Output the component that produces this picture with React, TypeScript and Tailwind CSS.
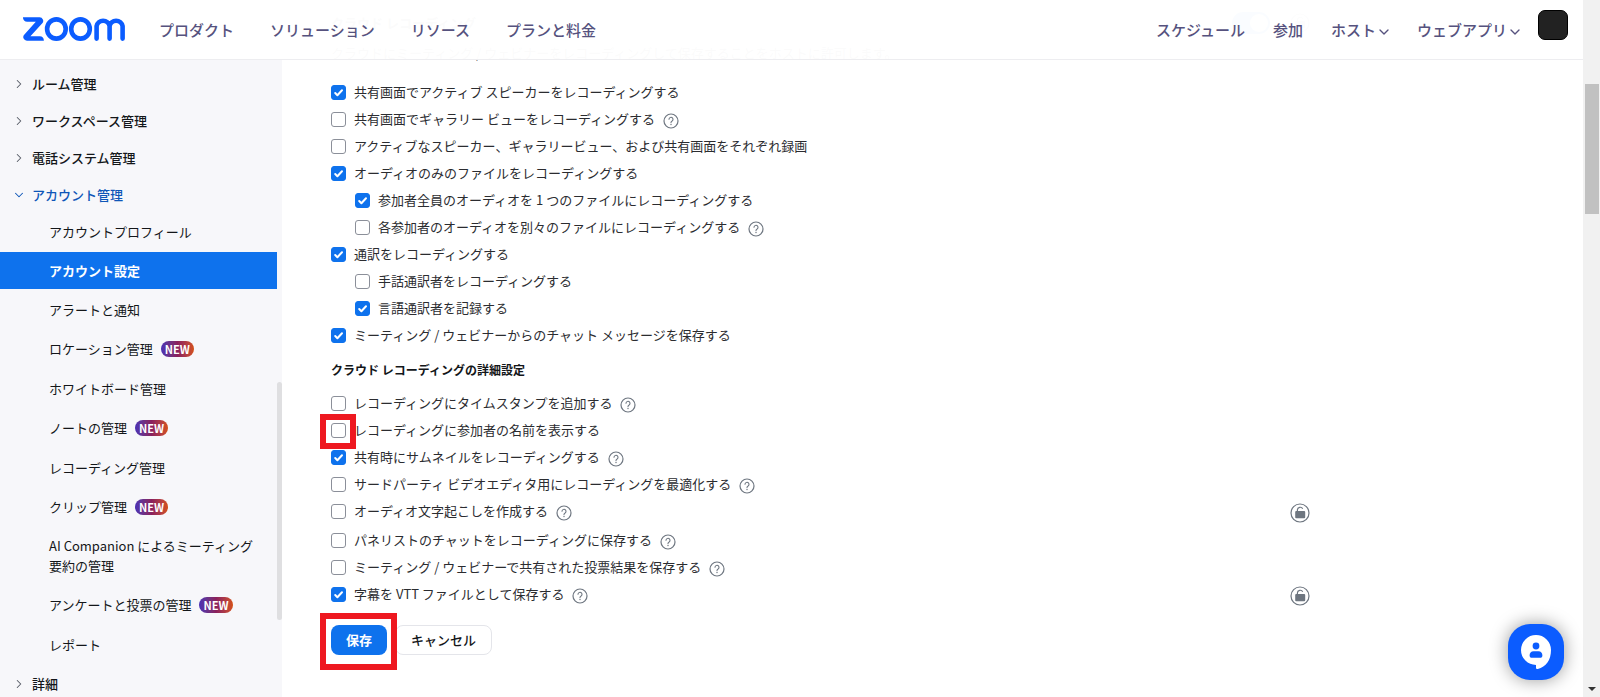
import React from "react";
import { ChevronDown, ChevronRight } from "lucide-react";

type SubItem = { label: string; isNew?: boolean; active?: boolean };
type Option = { id: string; label: string; checked?: boolean; help?: boolean; nested?: boolean; lock?: boolean; marked?: boolean };

const sections = ["ルーム管理", "ワークスペース管理", "電話システム管理"];

const accountItems: SubItem[] = [
  { label: "アカウントプロフィール" },
  { label: "アカウント設定", active: true },
  { label: "アラートと通知" },
  { label: "ロケーション管理", isNew: true },
  { label: "ホワイトボード管理" },
  { label: "ノートの管理", isNew: true },
  { label: "レコーディング管理" },
  { label: "クリップ管理", isNew: true },
  { label: "AI Companion によるミーティング要約の管理" },
  { label: "アンケートと投票の管理", isNew: true },
  { label: "レポート" },
];

const basicOptions: Option[] = [
  { id: "active-speaker", label: "共有画面でアクティブ スピーカーをレコーディングする", checked: true },
  { id: "gallery", label: "共有画面でギャラリー ビューをレコーディングする", help: true },
  { id: "separate", label: "アクティブなスピーカー、ギャラリービュー、および共有画面をそれぞれ録画" },
  { id: "audio-only", label: "オーディオのみのファイルをレコーディングする", checked: true },
  { id: "audio-one", label: "参加者全員のオーディオを 1 つのファイルにレコーディングする", checked: true, nested: true },
  { id: "audio-each", label: "各参加者のオーディオを別々のファイルにレコーディングする", help: true, nested: true },
  { id: "interpretation", label: "通訳をレコーディングする", checked: true },
  { id: "sign", label: "手話通訳者をレコーディングする", nested: true },
  { id: "language", label: "言語通訳者を記録する", checked: true, nested: true },
  { id: "chat", label: "ミーティング / ウェビナーからのチャット メッセージを保存する", checked: true },
];

const advancedOptions: Option[] = [
  { id: "timestamp", label: "レコーディングにタイムスタンプを追加する", help: true },
  { id: "names", label: "レコーディングに参加者の名前を表示する", marked: true },
  { id: "thumbnail", label: "共有時にサムネイルをレコーディングする", checked: true, help: true },
  { id: "editor", label: "サードパーティ ビデオエディタ用にレコーディングを最適化する", help: true },
  { id: "transcript", label: "オーディオ文字起こしを作成する", help: true, lock: true },
  { id: "panelist", label: "パネリストのチャットをレコーディングに保存する", help: true },
  { id: "polls", label: "ミーティング / ウェビナーで共有された投票結果を保存する", help: true },
  { id: "vtt", label: "字幕を VTT ファイルとして保存する", checked: true, help: true, lock: true },
];

function Logo() {
  return (
    <svg viewBox="0 0 102 24" className="h-6 w-[102px]" fill="none" stroke="#0b5cff" strokeWidth="4.6" strokeLinecap="round" strokeLinejoin="round" aria-label="Zoom" role="img">
      <path d="M0 .3h16.6a3.6 3.6 0 0 1 2.7 6L7.4 19.2h9.4a4 4 0 0 1 4 4.5H3.9a3.6 3.6 0 0 1-2.7-6L12.8 4.8H4.2A4.2 4.2 0 0 1 0 .3z" fill="#0b5cff" stroke="none" />
      <ellipse cx="33.4" cy="12" rx="9.3" ry="9.6" />
      <ellipse cx="57.5" cy="12" rx="9.3" ry="9.6" />
      <path d="M73.6 21.6V9.2a6.6 6.6 0 0 1 13 0v12.4M86.6 9.2a6.6 6.6 0 0 1 13 0v12.4" />
    </svg>
  );
}

function HelpIcon() {
  return (
    <svg viewBox="0 0 16 16" className="mt-[7px] size-4 shrink-0" fill="none" stroke="#6e7680" aria-hidden="true">
      <circle cx="8" cy="8" r="7" strokeWidth="1.2" />
      <path d="M6 6.3a2 2 0 1 1 3.1 1.7C8.3 8.5 8 8.8 8 9.6" strokeWidth="1.1" strokeLinecap="round" />
      <circle cx="8" cy="11.5" r=".7" fill="#6e7680" stroke="none" />
    </svg>
  );
}

function LockIcon() {
  return (
    <svg viewBox="0 0 20 20" className="size-5" fill="none" stroke="#6e7680" aria-hidden="true">
      <circle cx="10" cy="10" r="9" strokeWidth="1.2" />
      <rect x="5.2" y="8" width="10" height="7.2" rx="1" fill="#6e7680" stroke="none" />
      <path d="M7.400 8.200V7a2.800 2.800 0 0 1 5.300-1.200" strokeWidth="1.2" />
    </svg>
  );
}

function OptionRow({ option }: { option: Option }) {
  return (
    <li className={`flex items-start ${option.lock ? "h-[29px]" : "h-[27px]"} ${option.nested ? "pl-6" : ""}`}>
      <span className="relative mt-[6px] grid size-[15px] shrink-0">
        <input
          id={option.id}
          type="checkbox"
          defaultChecked={option.checked}
          className="peer col-start-1 row-start-1 size-[15px] appearance-none rounded-[3px] border border-[#8b8f99] bg-white checked:border-[#0e72ed] checked:bg-[#0e72ed]"
        />
        <svg viewBox="0 0 15 15" className="pointer-events-none col-start-1 row-start-1 hidden size-[15px] peer-checked:block" fill="none" stroke="#fff" strokeWidth="2" strokeLinecap="round" strokeLinejoin="round" aria-hidden="true">
          <path d="M4.2 8l2.2 2.2 4.6-5" />
        </svg>
        {option.marked && <span className="pointer-events-none absolute -top-[9px] -left-[11px] z-10 h-[35px] w-9 border-[6px] border-[#ee1820]" />}
      </span>
      <label htmlFor={option.id} className="ml-2 leading-[26px]">{option.label}</label>
      {option.help && (
        <button type="button" aria-label="ヘルプ" className="ml-2">
          <HelpIcon />
        </button>
      )}
      {option.lock && (
        <button type="button" aria-label="ロック" className="mt-[5px] ml-auto">
          <LockIcon />
        </button>
      )}
    </li>
  );
}

function Sidebar() {
  return (
    <aside className="flex w-[282px] shrink-0 bg-[#f7f7fa] pt-[65px]">
      <nav className="w-[277px] font-medium text-[#131619]">
        {sections.map((s) => (
          <a key={s} href="#" className="flex h-[37px] items-center gap-[6px] pl-3">
            <ChevronRight className="size-[14px] shrink-0 text-[#565b66]" strokeWidth={1.8} />
            <span>{s}</span>
          </a>
        ))}
        <a href="#" className="flex h-[37px] items-center gap-[6px] pl-3 text-[#0e56b8]">
          <ChevronDown className="size-[14px] shrink-0" strokeWidth={1.8} />
          {"アカウント管理"}
        </a>
        <ul className="font-normal">
          {accountItems.map((item) => (
            <li key={item.label} className="mb-[2px]">
              <a
                href="#"
                className={`flex items-center pr-4 pl-[49px] leading-5 ${item.active ? "bg-[#0e72ed] font-bold text-white" : ""} ${item.isNew ? "py-[9px]" : "min-h-[37px] py-2"}`}
              >
                {item.label}
                {item.isNew && (
                  <span className="ml-2 rounded-full bg-linear-to-r from-[#4a2fb5] via-[#8a1f5c] to-[#d4500f] px-1 text-[11px] leading-4 font-bold text-white">NEW</span>
                )}
              </a>
            </li>
          ))}
        </ul>
        <a href="#" className="flex h-[38px] items-center gap-[6px] pl-3">
          <ChevronRight className="size-[14px] shrink-0 text-[#565b66]" strokeWidth={1.8} />
          {"詳細"}
        </a>
      </nav>
      <div className="mt-[317px] h-[238px] w-[5px] rounded-full bg-[#dfdfe1]" />
    </aside>
  );
}

export default function App() {
  return (
    <div lang="ja" className="flex h-screen overflow-hidden bg-white font-['Noto_Sans_CJK_JP',sans-serif] text-[13px] text-[#2b2c30]">
      <div className="flex min-w-0 flex-1 flex-col">
        <header className="z-20 flex h-[60px] shrink-0 items-center border-b border-[#ededf0] bg-white/98 pt-[2px] pr-[15px] pl-[23px] text-[15px] font-medium text-[#56527e]">
          <a href="#" className="-mt-1"><Logo /></a>
          <nav className="ml-[34px] flex gap-9">
            <a href="#">プロダクト</a>
            <a href="#">ソリューション</a>
            <a href="#">リソース</a>
            <a href="#">プランと料金</a>
          </nav>
          <nav className="ml-auto flex items-center gap-7">
            <a href="#">スケジュール</a>
            <a href="#">参加</a>
            <button type="button" className="flex items-center">ホスト<ChevronDown className="-mr-[3px] size-4 translate-y-px" /></button>
            <button type="button" className="flex items-center">ウェブアプリ<ChevronDown className="-mr-[3px] size-4 translate-y-px" /></button>
          </nav>
          <button type="button" aria-label="プロフィール" className="mb-3 ml-[18px] size-[30px] rounded-[7px] border border-black bg-[#222]" />
        </header>

        <div className="-mt-[60px] flex min-h-0 flex-1">
          <Sidebar />
          <main className="min-w-0 flex-1 pt-[11px] pl-[49px]">
            <section className="max-w-[979px]">
              <div className="flex h-6 items-center">
                <h2 className="font-bold">クラウド レコーディング</h2>
                <button type="button" role="switch" aria-checked="true" aria-label="クラウド レコーディング" className="ml-auto flex h-[22px] w-[38px] justify-end rounded-full bg-[#0e72ed] p-[2px]">
                  <span className="size-[18px] rounded-full bg-white" />
                </button>
                <span className="ml-5"><LockIcon /></span>
              </div>
              <p className="mt-[6px] leading-6">クラウドにミーティング / ウェビナーをレコーディングして保存することをホストに許可します。</p>
              <ul className="mt-[14px]">
                {basicOptions.map((o) => <OptionRow key={o.id} option={o} />)}
              </ul>
              <h3 className="mt-2 text-[12px] leading-[26px] font-bold text-[#131619]">クラウド レコーディングの詳細設定</h3>
              <ul className="mt-[7px]">
                {advancedOptions.map((o) => <OptionRow key={o.id} option={o} />)}
              </ul>
              <div className="mt-[15px] flex gap-2">
                <div className="relative">
                  <button type="button" className="h-[30px] w-14 rounded-lg bg-[#0e72ed] font-bold text-white">保存</button>
                  <span className="pointer-events-none absolute -top-3 -left-[11px] h-[57px] w-[77px] border-[6px] border-[#ee1820]" />
                </div>
                <button type="button" className="h-[30px] w-[97px] rounded-lg border border-[#e4e5ea] font-medium text-[#131619]">キャンセル</button>
              </div>
            </section>
          </main>
        </div>
      </div>

      <div className="flex w-[17px] shrink-0 flex-col items-center bg-[#f1f1f1]">
        <div className="mt-[84px] h-[130px] w-[14px] bg-[#c1c1c1]" />
        <svg viewBox="0 0 8 4" className="mt-auto mb-[6px] h-1 w-2" aria-hidden="true"><path d="M0 0h8L4 4z" fill="#333" /></svg>
      </div>

      <button type="button" aria-label="サポート" className="fixed right-9 bottom-[17px] z-30 grid size-14 place-items-center rounded-[22px] bg-[#0b5cff] shadow-[0_0_18px_rgba(0,0,0,0.4)]">
        <svg viewBox="0 0 30 34" className="h-[34px] w-[30px]" aria-hidden="true">
          <path d="M15 0a15 15 0 0 1 15 15c0 10-5 17-13.2 19-1 .3-1.800-.2-1.800-1V30A15 15 0 0 1 15 0z" fill="#fff" />
          <circle cx="15" cy="11" r="3.4" fill="#0b5cff" />
          <path d="M12.6 16.2h4.8c2.6 0 4 2 4 4.2 0 1.500-.9 2.300-2.300 2.300h-8.200c-1.400 0-2.300-.8-2.300-2.300 0-2.200 1.400-4.200 4-4.200z" fill="#0b5cff" />
        </svg>
      </button>
    </div>
  );
}
